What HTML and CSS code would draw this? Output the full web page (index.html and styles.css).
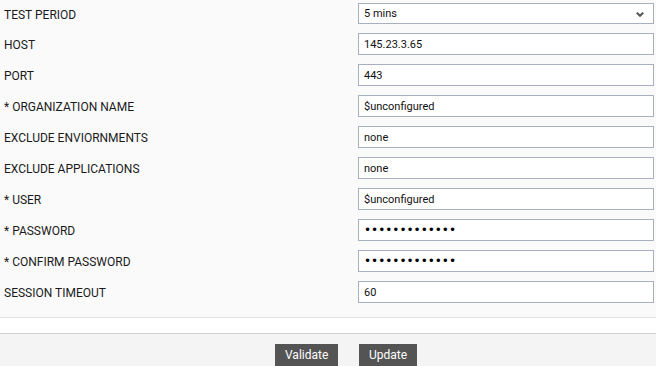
FILE: index.html
```html
<!DOCTYPE html>
<html>
<head>
<meta charset="utf-8">
<link rel="stylesheet" href="styles.css">
</head>
<body>
<form class="settings">
  <div class="rows">
    <div class="row">
      <label class="lbl">TEST PERIOD</label>
      <div class="select-wrap">
        <select class="field select"><option>5 mins</option></select>
        <svg class="chev" width="8" height="5" viewBox="0 0 8 5"><path d="M0.8 0.8 L4 3.8 L7.2 0.8" fill="none" stroke="#555" stroke-width="2"/></svg>
      </div>
    </div>
    <div class="row"><label class="lbl">HOST</label><input class="field" type="text" value="145.23.3.65"></div>
    <div class="row"><label class="lbl">PORT</label><input class="field" type="text" value="443"></div>
    <div class="row"><label class="lbl">* ORGANIZATION NAME</label><input class="field" type="text" value="$unconfigured"></div>
    <div class="row"><label class="lbl">EXCLUDE ENVIORNMENTS</label><input class="field" type="text" value="none"></div>
    <div class="row"><label class="lbl">EXCLUDE APPLICATIONS</label><input class="field" type="text" value="none"></div>
    <div class="row"><label class="lbl">* USER</label><input class="field" type="text" value="$unconfigured"></div>
    <div class="row"><label class="lbl">* PASSWORD</label><input class="field pw" type="password" value="unconfigured1"></div>
    <div class="row"><label class="lbl">* CONFIRM PASSWORD</label><input class="field pw" type="password" value="unconfigured1"></div>
    <div class="row"><label class="lbl">SESSION TIMEOUT</label><input class="field" type="text" value="60"></div>
  </div>
  <div class="spacer"></div>
  <div class="actions">
    <button type="button" class="btn btn-validate">Validate</button>
    <button type="button" class="btn btn-update">Update</button>
  </div>
</form>
</body>
</html>
```
FILE: styles.css
```css
html, body {
  margin: 0;
  padding: 0;
  background: #fafafa;
  font-family: Roboto, "Liberation Sans", Arial, sans-serif;
  font-size: 12px;
  color: #222;
  overflow: hidden;
}
.settings {
  display: flex;
  flex-direction: column;
  width: 656px;
}
.rows {
  display: flex;
  flex-direction: column;
  gap: 9px;
  padding: 3px 0 14px 0;
  border-bottom: 1px solid #e2e2e2;
}
.row {
  display: flex;
  align-items: center;
}
.lbl {
  width: 354px;
  padding-left: 4px;
  font-size: 12px;
  color: #1a1a1a;
  position: relative;
  top: 1px;
}
.field {
  box-sizing: border-box;
  width: 296px;
  height: 22px;
  margin: 0;
  border: 1px solid #a9aec0;
  border-radius: 0;
  background: #fff;
  padding: 0 5px;
  font-family: Roboto, "Liberation Sans", Arial, sans-serif;
  font-size: 11px;
  color: #111;
  outline: none;
}
.pw {
  font-family: "DejaVu Sans", sans-serif;
  font-size: 12px;
  letter-spacing: 0;
  color: #000;
}
.select-wrap {
  position: relative;
  width: 296px;
  height: 21px;
}
.select {
  height: 21px;
  appearance: none;
  -webkit-appearance: none;
  display: block;
}
.chev {
  position: absolute;
  right: 10px;
  top: 9px;
}
.spacer {
  height: 15px;
  background: #fff;
  border-bottom: 1px solid #d2d2d2;
}
.actions {
  display: flex;
  justify-content: center;
  gap: 21px;
  padding: 10px 0 0 36px;
  background: #f4f4f4;
  height: 40px;
}
.btn {
  height: 22px;
  border: none;
  border-radius: 0;
  background: #545454;
  color: #fff;
  font-family: Roboto, "Liberation Sans", Arial, sans-serif;
  font-size: 12px;
  padding: 0 10px;
  line-height: 20px;
  cursor: pointer;
}
.btn-validate { width: 63px; }
.btn-update { width: 58px; }
```
